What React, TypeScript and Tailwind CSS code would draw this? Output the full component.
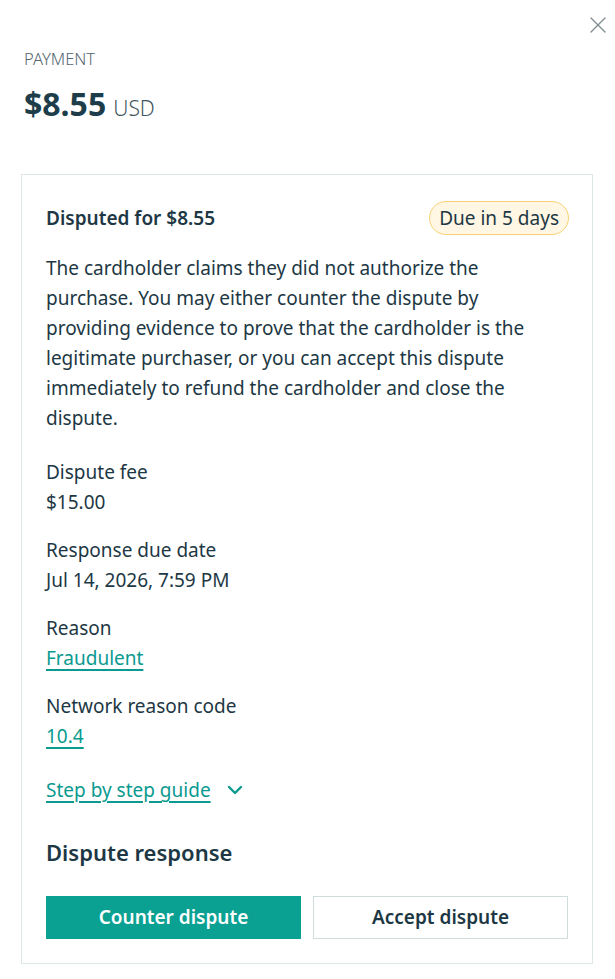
import { ChevronDown, X } from "lucide-react";

const details = [
  { label: "Dispute fee", value: "$15.00" },
  { label: "Response due date", value: "Jul 14, 2026, 7:59 PM" },
  { label: "Reason", value: "Fraudulent", link: true },
  { label: "Network reason code", value: "10.4", link: true },
];

export default function App() {
  return (
    <div className="relative min-h-[979px] bg-white pl-[21px] pr-[22px] font-['Noto_Sans',sans-serif] text-[#1d3844]">
      {/* Close */}
      <button className="absolute right-[3px] top-[11px] text-[#7d8b90]" aria-label="Close">
        <X className="h-[28px] w-[28px]" strokeWidth={1.1} />
      </button>

      {/* Header */}
      <div className="pl-[3px] pt-[48px]">
        <div className="text-[16.5px] font-light leading-[22px] text-[#55666e]">PAYMENT</div>
        <div className="mt-[15px] flex items-baseline gap-[7px] leading-[38px]">
          <span className="text-[32px] font-bold text-[#1e3d4a]">$8.55</span>
          <span className="text-[21px] font-light text-[#3f5560]">USD</span>
        </div>
      </div>

      {/* Dispute card */}
      <div className="mt-[47px] border border-[#dce7e7] px-[24px] pb-[24px] pt-[26px]">
        <div className="flex items-center justify-between">
          <h3 className="text-[19px] font-semibold leading-[30px]">Disputed for $8.55</h3>
          <span className="-mr-[1px] rounded-full border border-[#f8d274] bg-[#fff6e3] px-[9px] text-[19px] leading-[32px]">
            Due in 5 days
          </span>
        </div>

        <p className="mt-[18px] text-[19px] leading-[30px]">
          The cardholder claims they did not authorize the purchase. You may either counter the dispute by
          providing evidence to prove that the cardholder is the legitimate purchaser, or you can accept this
          dispute immediately to refund the cardholder and close the dispute.
        </p>

        <div className="mt-[24px] flex flex-col gap-[18px]">
          {details.map((d) => (
            <div key={d.label} className="text-[19px] leading-[30px]">
              <div>{d.label}</div>
              {d.link ? (
                <a href="#" className="text-[#0a9a8f] underline decoration-[1.5px] underline-offset-[4px]">
                  {d.value}
                </a>
              ) : (
                <div>{d.value}</div>
              )}
            </div>
          ))}
        </div>

        <a
          href="#"
          className="mt-[24px] flex items-center gap-[12px] text-[19px] leading-[30px] text-[#0a9a8f]"
        >
          <span className="underline decoration-[1.5px] underline-offset-[4px]">Step by step guide</span>
          <ChevronDown className="h-[24px] w-[24px]" strokeWidth={2.4} />
        </a>

        <h2 className="mt-[32px] text-[22px] font-semibold leading-[30px]">Dispute response</h2>

        <div className="mt-[29px] grid grid-cols-2 gap-[12px]">
          <button className="h-[43px] bg-[#0aa193] text-[19px] font-semibold text-white">Counter dispute</button>
          <button className="h-[43px] border border-[#cfdcdc] bg-white text-[19px] font-semibold text-[#1d3844]">
            Accept dispute
          </button>
        </div>
      </div>
    </div>
  );
}
